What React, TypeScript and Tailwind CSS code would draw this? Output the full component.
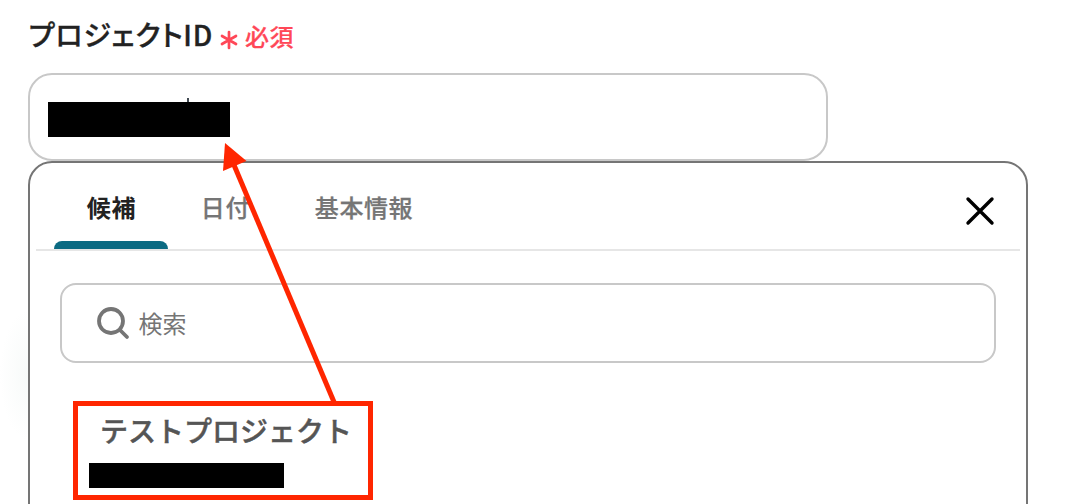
import React, { useState } from 'react';

const TABS = ['候補', '日付', '基本情報'];

const CloseIcon: React.FC = () => (
  <svg width="32" height="32" viewBox="0 0 32 32" fill="none" stroke="#000" strokeWidth="3.4" strokeLinecap="round">
    <path d="M4 4 28 28M28 4 4 28" />
  </svg>
);

const SearchIcon: React.FC = () => (
  <svg width="36" height="36" viewBox="0 0 36 36" fill="none" stroke="#757575" strokeLinecap="round">
    <circle cx="16" cy="16" r="12" strokeWidth="3.8" />
    <path d="M25 25 32 32" strokeWidth="3.8" />
  </svg>
);

const RequiredIcon: React.FC = () => (
  <svg width="18" height="20" viewBox="0 0 18 20" fill="none" stroke="#ff4757" strokeWidth="2.7" strokeLinecap="round">
    <path d="M9 2V18M2 6 16 14M16 6 2 14" />
  </svg>
);

const App: React.FC = () => {
  const [activeTab, setActiveTab] = useState(TABS[0]);

  return (
    <div className="relative h-[504px] w-[1068px] overflow-hidden bg-white pl-7 font-['Noto_Sans_CJK_JP',sans-serif]">
      {/* soft glow behind the panel */}
      <div className="absolute top-[310px] left-0 h-[130px] w-14 bg-[radial-gradient(closest-side,#f7faf9,#ffffff)]" />

      <div className="flex h-[73px] items-center text-[#222]">
        <span className="mb-1.5 ml-px text-[28px] leading-none font-medium tracking-[0.025em] [-webkit-text-stroke:0.35px_#222] [font-feature-settings:'palt']">プロジェクトID</span>
        <span className="ml-[7px] flex items-center gap-[7px] text-[#ff4757]">
          <span className="mt-[7px]">
            <RequiredIcon />
          </span>
          <span className="mb-0.5 text-2xl leading-none font-medium tracking-[0.02em] [-webkit-text-stroke:0.2px_#ff4757]">必須</span>
        </span>
      </div>

      <div className="h-[88px] w-[800px] rounded-3xl border-2 border-[#c8c8c8] bg-white pt-[23px] pl-[18px]">
        <div className="ml-[139px] h-1 w-0.5 bg-[#424a52]" />
        <div className="h-[35px] w-[182px] bg-black" />
      </div>

      <div className="relative h-[400px] w-[1000px] rounded-3xl border-2 border-[#757575] bg-white">
        <div className="mx-1.5 flex h-[88px] items-end justify-between border-b-2 border-[#e6e6e6] pr-6 pl-[18px]">
          <div className="flex">
            {TABS.map(tab => (
              <button
                key={tab}
                onClick={() => setActiveTab(tab)}
                className={`flex h-[86px] flex-col justify-between text-2xl tracking-[0.025em] ${activeTab === tab ? 'font-bold text-[#222]' : 'font-medium text-[#757575] [-webkit-text-stroke:0.25px_#757575]'}`}
              >
                <span className="mt-[26px] pr-8 pl-[32.8px] leading-9">{tab}</span>
                <span className={`h-2 w-full rounded-t-lg ${activeTab === tab ? 'bg-[#0b6a82]' : ''}`} />
              </button>
            ))}
          </div>
          <button className="mb-[22px]">
            <CloseIcon />
          </button>
        </div>

        <div className="mx-[30px] mt-8 flex h-20 items-center rounded-2xl border-2 border-[#c8c8c8] pl-[33px]">
          <SearchIcon />
          <span className="ml-[7.5px] text-2xl leading-none text-[#757575]">検索</span>
        </div>

        <div className="mt-[38px] ml-[43px] h-[99px] w-[300px] border-5 border-[#ff2600] pl-[11px]">
          <div className="mt-1 ml-[11px] text-[28px] leading-10 font-medium text-[#555] [-webkit-text-stroke:0.45px_#555]">テストプロジェクト</div>
          <div className="mt-[13px] h-[25px] w-[195px] bg-black" />
        </div>
      </div>

      {/* arrow from the candidate to the input */}
      <svg className="pointer-events-none absolute top-0 left-0" width="1068" height="504" viewBox="0 0 1068 504">
        <path d="M334 402 234 165" stroke="#ff2600" strokeWidth="5" />
        <path d="M225 143 246.500 161 223 171Z" fill="#ff2600" />
      </svg>
    </div>
  );
};

export default App;
